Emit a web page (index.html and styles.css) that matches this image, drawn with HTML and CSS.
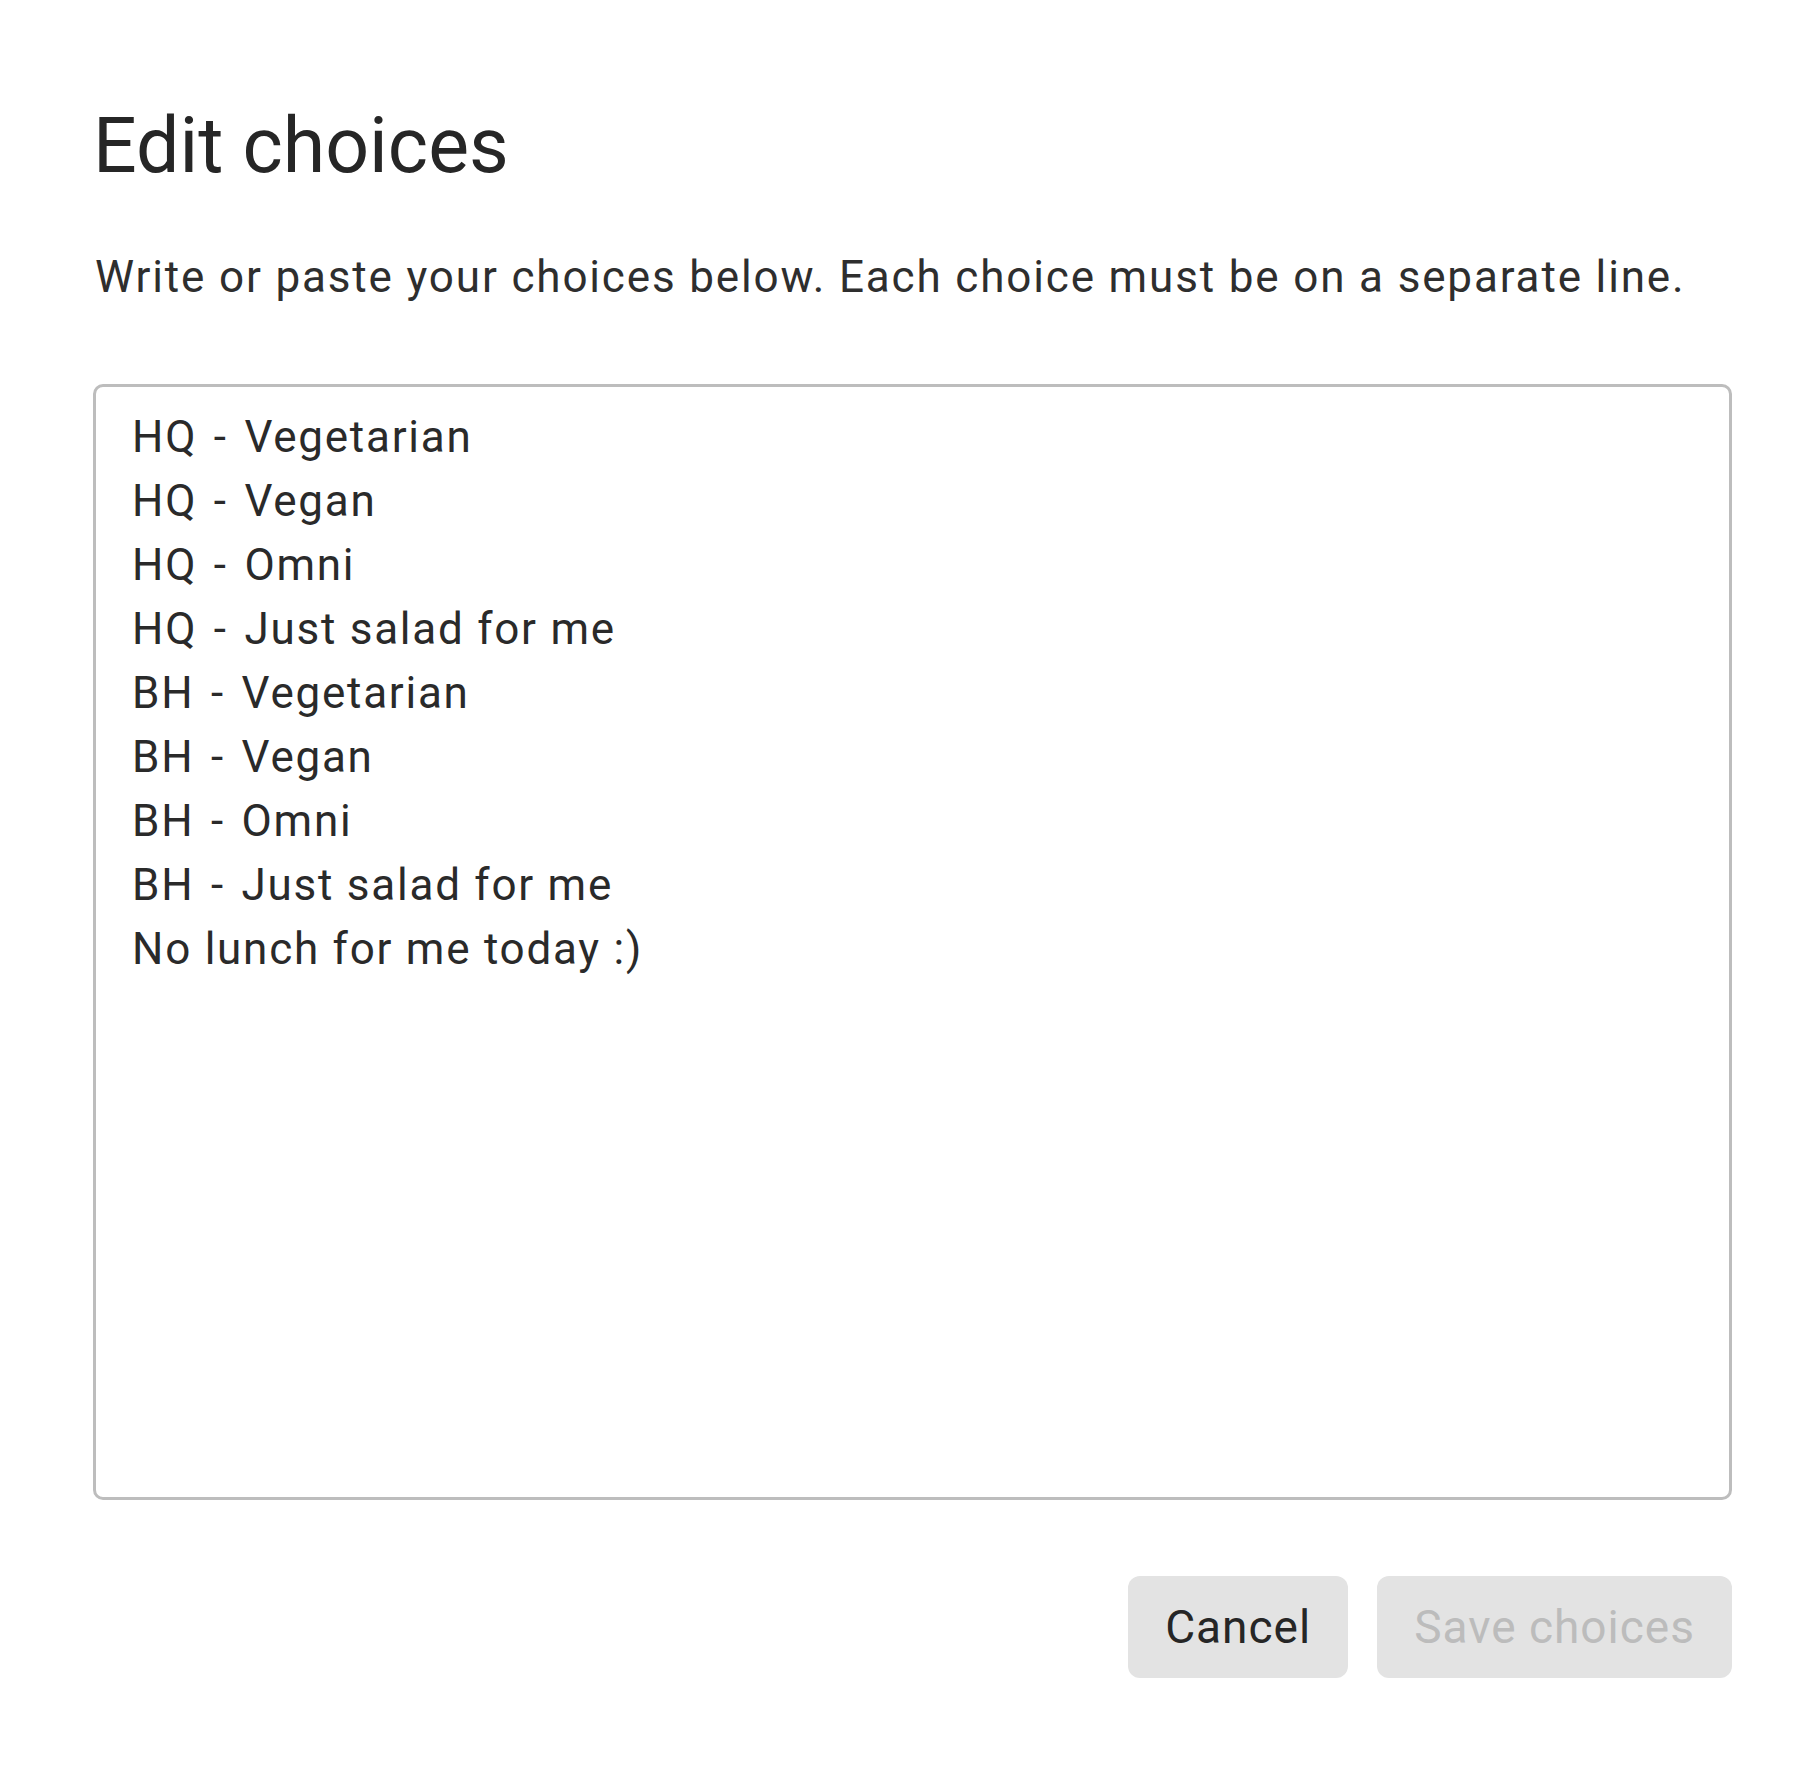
FILE: index.html
```html
<!DOCTYPE html>
<html lang="en">
<head>
<meta charset="utf-8">
<title>Edit choices</title>
<link rel="stylesheet" href="styles.css">
</head>
<body>
<div class="dialog">
  <h1 class="title">Edit choices</h1>
  <p class="hint">Write or paste your choices below. Each choice must be on a separate line.</p>
  <div class="choices" role="textbox" aria-multiline="true" contenteditable="true" spellcheck="false">
    <div class="line">HQ <span class="dash">-</span> Vegetarian</div>
    <div class="line">HQ <span class="dash">-</span> Vegan</div>
    <div class="line">HQ <span class="dash">-</span> Omni</div>
    <div class="line">HQ <span class="dash">-</span> Just salad for me</div>
    <div class="line">BH <span class="dash">-</span> Vegetarian</div>
    <div class="line">BH <span class="dash">-</span> Vegan</div>
    <div class="line">BH <span class="dash">-</span> Omni</div>
    <div class="line">BH <span class="dash">-</span> Just salad for me</div>
    <div class="line">No lunch for me today :)</div>
  </div>
  <div class="actions">
    <button class="btn btn-cancel" type="button">Cancel</button>
    <button class="btn btn-save" type="button" disabled>Save choices</button>
  </div>
</div>
</body>
</html>
```

FILE: styles.css
```css
html, body {
  margin: 0;
  padding: 0;
  background: #ffffff;
}

body {
  font-family: Roboto, "Noto Sans", sans-serif;
  color: #2a2a2a;
}

.dialog {
  display: flex;
  flex-direction: column;
  padding: 0 84px 0 93px;
}

.title {
  margin: 0;
  padding-top: 100px;
  font-size: 77px;
  line-height: 92px;
  font-weight: 400;
  color: #262626;
}

.hint {
  margin: 57px 0 0 2px;
  font-size: 44px;
  line-height: 56px;
  letter-spacing: 1.85px;
  color: #2e2e2e;
}

.choices {
  margin-top: 79px;
  box-sizing: border-box;
  width: 100%;
  height: 1116px;
  border: 3px solid #bdbdbd;
  border-radius: 10px;
  padding: 18px 36px;
  font-size: 44px;
  line-height: 64px;
  letter-spacing: 1.75px;
  color: #2a2a2a;
  outline: none;
  overflow: hidden;
}

.line {
  height: 64px;
  white-space: pre;
}

.dash {
  margin: 0 4px;
}

.actions {
  margin-top: 76px;
  display: flex;
  justify-content: flex-end;
  gap: 29px;
}

.btn {
  height: 102px;
  border: none;
  border-radius: 12px;
  background: #e3e3e3;
  padding: 0 37px;
  font-family: Roboto, "Noto Sans", sans-serif;
  font-size: 46px;
  letter-spacing: 1px;
  color: #262626;
}

.btn-save {
  color: #bcbcbc;
}
```
